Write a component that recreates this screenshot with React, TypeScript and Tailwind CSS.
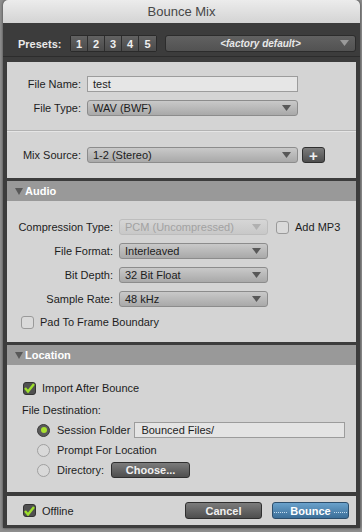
import React from "react";

const Arrow = ({ color = "#4a4a4a" }: { color?: string }) => (
  <svg width="9" height="6" viewBox="0 0 9 6" className="absolute right-[6px] top-[4px]">
    <path d="M0 0 L9 0 L4.5 6 Z" fill={color} />
  </svg>
);

const Select = ({ value, className, disabled }: { value: string; className: string; disabled?: boolean }) => (
  <div
    className={`relative h-[16px] rounded-[3px] border pl-[5px] text-[11px] leading-[14px] ${
      disabled
        ? "border-[#bdbdbd] bg-linear-to-b from-[#d6d6d6] to-[#c8c8c8] text-[#a2a2a2]"
        : "border-[#8c8c8c] bg-linear-to-b from-[#c9c9c9] to-[#a9a9a9] text-[#1c1c1c]"
    } ${className}`}
  >
    {value}
    <Arrow color={disabled ? "#b0b0b0" : "#585858"} />
  </div>
);

const Check = ({ checked }: { checked?: boolean }) =>
  checked ? (
    <div className="flex h-[13px] w-[13px] shrink-0 items-center justify-center rounded-[3px] border border-[#333] bg-[#505050]">
      <svg width="11" height="10" viewBox="0 0 11 10">
        <path d="M1 5 L4 8.5 L10 1" stroke="#9ee02c" strokeWidth="2.4" fill="none" />
      </svg>
    </div>
  ) : (
    <div className="h-[13px] w-[13px] shrink-0 rounded-[3px] border border-[#9a9a9a] bg-[#dadada]" />
  );

const Radio = ({ on }: { on?: boolean }) =>
  on ? (
    <div className="flex h-[13px] w-[13px] shrink-0 items-center justify-center rounded-full border border-[#3a3a3a] bg-[#5a5a5a]">
      <div className="h-[6px] w-[6px] rounded-full bg-[#a8e02e]" />
    </div>
  ) : (
    <div className="h-[13px] w-[13px] shrink-0 rounded-full border border-[#a0a0a0] bg-[#d9d9d9]" />
  );

const Header = ({ title }: { title: string }) => (
  <div className="flex h-[20px] items-center bg-[#999999] pl-[8px]">
    <svg width="8" height="7" viewBox="0 0 8 7" className="mr-[2px]">
      <path d="M0 0 L8 0 L4 7 Z" fill="#595959" />
    </svg>
    <span className="text-[11px] font-bold text-white">{title}</span>
  </div>
);

const darkBtn =
  "flex items-center justify-center rounded-[3px] border border-[#2f2f2f] bg-linear-to-b from-[#7c7c7c] to-[#4e4e4e] text-[11px] font-bold text-[#f0f0f0]";

export default function App() {
  return (
    <div className="h-[532px] w-[362px] overflow-hidden bg-[#8e8e8e] font-['Liberation_Sans',Arial,sans-serif] leading-[16px]">
      <div className="ml-[3px] h-[528px] w-[357px] overflow-hidden rounded-t-[5px] bg-[#3c3c3c] shadow-[0_0_3px_rgba(0,0,0,0.6)]">
        {/* Title */}
        <div className="flex h-[23px] items-center justify-center bg-linear-to-b from-[#ececec] to-[#d4d4d4] text-[13px] text-[#474747]">
          Bounce Mix
        </div>

        {/* Presets */}
        <div className="flex h-[34px] items-center border-b border-[#2c2c2c] pl-[15px] pt-[8px]">
          <span className="w-[52px] text-[11px] font-bold text-[#eaeaea]">Presets:</span>
          <div className="flex h-[17px] rounded-[2px] border border-[#2a2a2a]">
            {["1", "2", "3", "4", "5"].map((n, i) => (
              <div
                key={n}
                className={`flex w-[17px] items-center justify-center bg-linear-to-b from-[#626262] to-[#4b4b4b] text-[11px] font-bold text-[#efefef] ${
                  i < 4 ? "border-r border-[#2e2e2e]" : ""
                }`}
              >
                {n}
              </div>
            ))}
          </div>
          <div className="relative ml-[8px] flex h-[17px] w-[191px] items-center justify-center rounded-[3px] border border-[#2c2c2c] bg-linear-to-b from-[#616161] to-[#525252] text-[10px] font-bold italic text-[#e8e8e8]">
            &lt;factory default&gt;
            <Arrow color="#9a9a9a" />
          </div>
        </div>

        <div className="px-[4px] pt-[5px]">
          {/* Panel 1 */}
          <div className="h-[116px] bg-[#d4d4d4] pt-[14px] text-[11px] text-[#1d1d1d]">
            <div className="flex items-center">
              <span className="w-[74px] text-right">File Name:</span>
              <div className="ml-[6px] h-[16px] w-[211px] border border-[#9c9c9c] bg-[#e6e6e6] pl-[5px] leading-[14px]">test</div>
            </div>
            <div className="mt-[8px] flex items-center">
              <span className="w-[74px] text-right">File Type:</span>
              <Select value="WAV (BWF)" className="ml-[6px] w-[211px]" />
            </div>
            <div className="mt-[14px] border-t border-[#b3b3b3] border-b-white/40 border-b" />
            <div className="mt-[15px] flex items-center">
              <span className="w-[74px] text-right">Mix Source:</span>
              <Select value="1-2 (Stereo)" className="ml-[6px] w-[211px]" />
              <div className={`${darkBtn} ml-[4px] h-[16px] w-[23px] text-[15px] leading-none`}>+</div>
            </div>
          </div>

          {/* Audio */}
          <div className="mt-[3px]">
            <Header title="Audio" />
            <div className="h-[141px] bg-[#d4d4d4] pt-[18px] text-[11px] text-[#1d1d1d]">
              <div className="flex items-center">
                <span className="w-[106px] text-right">Compression Type:</span>
                <Select value="PCM (Uncompressed)" className="ml-[6px] w-[149px]" disabled />
                <div className="ml-[8px]">
                  <Check />
                </div>
                <span className="ml-[6px]">Add MP3</span>
              </div>
              <div className="mt-[8px] flex items-center">
                <span className="w-[106px] text-right">File Format:</span>
                <Select value="Interleaved" className="ml-[6px] w-[149px]" />
              </div>
              <div className="mt-[8px] flex items-center">
                <span className="w-[106px] text-right">Bit Depth:</span>
                <Select value="32 Bit Float" className="ml-[6px] w-[149px]" />
              </div>
              <div className="mt-[8px] flex items-center">
                <span className="w-[106px] text-right">Sample Rate:</span>
                <Select value="48 kHz" className="ml-[6px] w-[149px]" />
              </div>
              <div className="mt-[7px] flex items-center pl-[14px]">
                <Check />
                <span className="ml-[6px]">Pad To Frame Boundary</span>
              </div>
            </div>
          </div>

          {/* Location */}
          <div className="mt-[3px]">
            <Header title="Location" />
            <div className="h-[127px] bg-[#d4d4d4] pt-[15px] text-[11px] text-[#1d1d1d]">
              <div className="flex h-[16px] items-center pl-[16px]">
                <Check checked />
                <span className="ml-[6px]">Import After Bounce</span>
              </div>
              <div className="mt-[6px] h-[16px] pl-[15px]">File Destination:</div>
              <div className="mt-[2px] flex h-[20px] items-center pl-[30px]">
                <Radio on />
                <span className="ml-[7px]">Session Folder</span>
                <div className="ml-[4px] h-[16px] w-[211px] border border-[#9c9c9c] bg-[#e4e4e4] pl-[6px] leading-[14px]">
                  Bounced Files/
                </div>
              </div>
              <div className="flex h-[20px] items-center pl-[30px]">
                <Radio />
                <span className="ml-[7px]">Prompt For Location</span>
              </div>
              <div className="flex h-[20px] items-center pl-[30px]">
                <Radio />
                <span className="ml-[7px]">Directory:</span>
                <div className={`${darkBtn} ml-[7px] h-[16px] w-[79px]`}>Choose...</div>
              </div>
            </div>
          </div>

          {/* Footer */}
          <div className="mt-[4px] flex h-[29px] items-center bg-[#d4d4d4] text-[11px] text-[#1d1d1d]">
            <div className="ml-[16px]">
              <Check checked />
            </div>
            <span className="ml-[6px]">Offline</span>
            <div className={`${darkBtn} ml-auto h-[17px] w-[77px]`}>Cancel</div>
            <div className="ml-[10px] mr-[7px] flex h-[17px] w-[77px] items-center justify-center gap-[3px] rounded-[3px] border border-[#2c4e6c] bg-linear-to-b from-[#6aa2cc] to-[#3b6e98] text-[11px] font-bold text-white">
              <span className="mt-[4px] w-[13px] border-b border-dotted border-[#c6def0]" />
              Bounce
              <span className="mt-[4px] w-[13px] border-b border-dotted border-[#c6def0]" />
            </div>
          </div>
        </div>
      </div>
    </div>
  );
}
